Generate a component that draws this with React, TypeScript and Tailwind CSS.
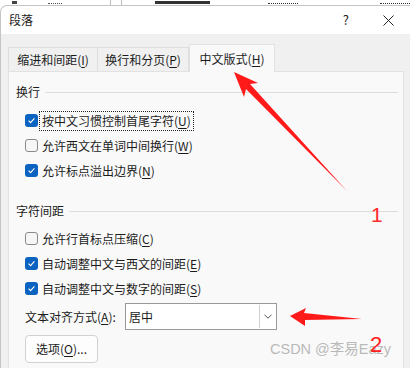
import React from 'react';

const FONT = '"Noto Sans CJK SC", "Microsoft YaHei", "Noto Sans", sans-serif';

const Mn = ({ k }: { k: string }) => (
  <span>
    (<u className="underline-offset-[2px]">{k}</u>)
  </span>
);

const CheckBox = ({ checked }: { checked: boolean }) =>
  checked ? (
    <span className="flex h-[13px] w-[13px] shrink-0 items-center justify-center rounded-[3px] bg-[#0b63c1]">
      <svg width="9" height="9" viewBox="0 0 9 9">
        <path d="M1.6 4.7 L3.6 6.6 L7.4 2.4" fill="none" stroke="#fff" strokeWidth="1.1" />
      </svg>
    </span>
  ) : (
    <span className="h-[13px] w-[13px] shrink-0 rounded-[3px] border border-[#8a8a8a] bg-[#f6f6f6]" />
  );

interface RowProps {
  checked: boolean;
  text: string;
  k: string;
  focused?: boolean;
}

const Row = ({ checked, text, k, focused = false }: RowProps) => (
  <div className="flex h-[25px] items-center">
    <CheckBox checked={checked} />
    <span
      className={`ml-[2px] px-[2px] leading-[18px] ${focused ? 'outline outline-1 outline-dotted outline-[#222]' : ''}`}
    >
      {text}
      <Mn k={k} />
    </span>
  </div>
);

const Heading = ({ label }: { label: string }) => (
  <div className="flex h-[16px] items-center">
    <span className="leading-[16px]">{label}</span>
    <div className="ml-[5px] h-px flex-1 bg-[#dcdcdc]" />
  </div>
);

export default function App() {
  return (
    <div
      className="relative h-[368px] w-[410px] overflow-hidden bg-white text-[12px] text-[#1b1b1b]"
      style={{ fontFamily: FONT }}
    >
      {/* document peeking behind the dialog */}
      <div className="flex h-[5px] items-start">
        <div className="ml-[12px] mt-[1px] h-[3px] w-[5px] bg-[#444]" />
        <div className="ml-[31px] h-[4px] w-[14px] border-b border-dotted border-[#555]" />
        <div className="ml-[48px] h-[5px] w-px bg-[#bbb]" />
        <div className="ml-[10px] h-[5px] w-px bg-[#bbb]" />
        <div className="ml-[33px] mt-[1px] h-[3px] w-[56px] bg-[#333]" />
        <div className="ml-[58px] h-[4px] w-[30px] border-b border-dotted border-[#333]" />
        <div className="ml-[82px] h-[4px] w-[30px] border-b border-dotted border-[#333]" />
      </div>

      <div className="flex h-[363px] flex-col overflow-hidden rounded-tl-[7px] border-l border-t border-[#c4c4c4] bg-white">
        {/* title bar */}
        <div className="flex h-[28px] shrink-0 items-center pl-[8px]">
          <span className="leading-[16px]">段落</span>
          <span className="ml-auto text-[13px] leading-[16px]">?</span>
          <svg className="ml-[34px] mr-[16px]" width="11" height="11" viewBox="0 0 11 11">
            <path d="M0.5 0.5 L10.5 10.5 M10.5 0.5 L0.5 10.5" stroke="#222" strokeWidth="1" />
          </svg>
        </div>

        {/* body */}
        <div className="flex flex-1 flex-col bg-[#f0f0f0] pl-[7px] pr-[6px] pt-[10px]">
          <div className="flex h-[27px] items-end">
            <div className="flex h-[24px] w-[90px] items-center justify-center border-l border-r border-t border-[#dedede] bg-[#f0f0f0] leading-[16px]">
              <span>
                缩进和间距<Mn k="I" />
              </span>
            </div>
            <div className="flex h-[24px] w-[91px] items-center justify-center border-r border-t border-[#dedede] bg-[#f0f0f0] leading-[16px]">
              <span>
                换行和分页<Mn k="P" />
              </span>
            </div>
            <div className="relative z-10 -mb-px flex h-[28px] w-[86px] items-center justify-center border-l border-r border-t border-[#e2e2e2] bg-[#f9f9f9] leading-[16px]">
              <span>
                中文版式<Mn k="H" />
              </span>
            </div>
          </div>

          {/* tab panel */}
          <div className="flex-1 border border-b-0 border-[#e2e2e2] bg-[#f9f9f9] pl-[7px] pr-[5px] pt-[12px]">
            <Heading label="换行" />
            <div className="mt-[8px] pl-[9px]">
              <Row checked text="按中文习惯控制首尾字符" k="U" focused />
              <Row checked={false} text="允许西文在单词中间换行" k="W" />
              <Row checked text="允许标点溢出边界" k="N" />
            </div>

            <div className="mt-[20px]">
              <Heading label="字符间距" />
            </div>
            <div className="mt-[7px] pl-[9px]">
              <Row checked={false} text="允许行首标点压缩" k="C" />
              <Row checked text="自动调整中文与西文的间距" k="E" />
              <Row checked text="自动调整中文与数字的间距" k="S" />
            </div>

            <div className="mt-[2px] flex h-[27px] items-center pl-[9px]">
              <span className="w-[100px] leading-[16px]">
                文本对齐方式<Mn k="A" />:
              </span>
              <div className="flex h-[27px] w-[152px] items-stretch border border-[#9a9a9a] bg-white">
                <span className="flex flex-1 items-center pl-[3px] leading-[16px]">居中</span>
                <span className="my-[1px] mr-[1px] flex w-[16px] items-center justify-center border-l border-[#d0d0d0]">
                  <svg width="8" height="5" viewBox="0 0 8 5">
                    <path d="M0.5 0.8 L4 4.2 L7.5 0.8" fill="none" stroke="#555" strokeWidth="1" />
                  </svg>
                </span>
              </div>
            </div>

            <div className="ml-[9px] mt-[5px] flex h-[28px] w-[73px] items-center justify-center rounded-[4px] border border-[#d2d2d2] bg-[#fdfdfd] leading-[16px]">
              <span>
                选项<Mn k="O" />...
              </span>
            </div>
          </div>
        </div>
      </div>

      {/* screenshot annotations */}
      <svg className="pointer-events-none absolute left-0 top-0" width="410" height="368" viewBox="0 0 410 368">
        <polygon
          points="347,191 250,84 258,83 234,72 244,97 246,89"
          fill="#ff1a1a"
        />
        <polygon
          points="362,319 305,320 305,326 290,316 306,308 304,313"
          fill="#ff1a1a"
        />
      </svg>
      <span
        className="absolute left-[371px] top-[203px] text-[21px] leading-[24px] text-[#ff2a2a]"
        style={{ fontFamily: '"Liberation Sans", sans-serif' }}
      >
        1
      </span>
      <span
        className="absolute left-[270px] top-[340px] text-[14.5px] leading-[18px] text-[#b9b9b9]"
        style={{ fontFamily: '"Liberation Sans", "Noto Sans CJK SC", sans-serif' }}
      >
        CSDN @李易Eazy
      </span>
      <span
        className="absolute left-[370px] top-[333px] text-[22px] leading-[24px] text-[#ff2020]"
        style={{ fontFamily: '"Liberation Sans", sans-serif' }}
      >
        2
      </span>
    </div>
  );
}
